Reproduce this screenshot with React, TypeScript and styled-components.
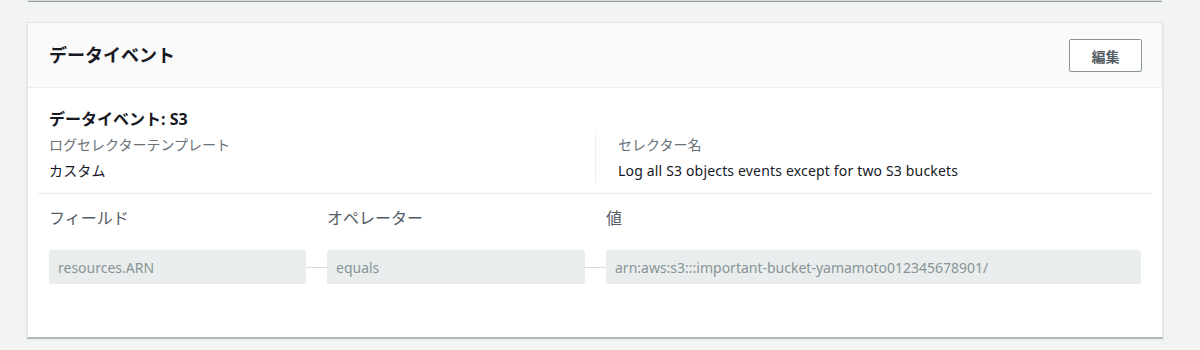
import React from "react";
import styled, { createGlobalStyle } from "styled-components";

const GlobalStyle = createGlobalStyle`
  html, body {
    margin: 0;
    padding: 0;
    background: #f2f3f3;
  }
  body {
    font-family: "Noto Sans", "Noto Sans CJK JP", sans-serif;
    color: #16191f;
  }
`;

const Page = styled.div`
  width: 1200px;
  height: 350px;
  box-sizing: border-box;
  padding: 0 37px 0 27px;
  overflow: hidden;
`;

const PrevCardEdge = styled.div`
  height: 1px;
  margin: 0 1px 20px;
  background: #d5dbdb;
  border-bottom: 1px solid #95a1a2;
`;

const Card = styled.section`
  background: #fff;
  border: 1px solid #e1e4e4;
  border-bottom-color: #aab7b8;
  box-shadow: 0 1px 1px 0 rgba(0, 28, 36, 0.25);
`;

const Header = styled.div`
  height: 65px;
  box-sizing: border-box;
  padding: 0 20px 0 21px;
  display: flex;
  align-items: center;
  justify-content: space-between;
  background: #fafafa;
  border-bottom: 1px solid #eaeded;
`;

const Title = styled.h2`
  margin: 0;
  font-size: 18px;
  font-weight: 700;
  line-height: 24px;
  color: #16191f;
`;

const Button = styled.button`
  width: 73px;
  height: 33px;
  margin-top: 1px;
  background: #fff;
  border: 1px solid #879596;
  border-radius: 2px;
  font-family: "Noto Sans CJK JP", sans-serif;
  font-size: 14px;
  font-weight: 700;
  color: #545b64;
  cursor: pointer;
`;

const Body = styled.div`
  padding: 20px 10px 53px;
`;

const Inner = styled.div`
  padding: 0 11px;
`;

const SubTitle = styled.h3`
  margin: 0 0 4px;
  font-size: 16px;
  font-weight: 700;
  line-height: 22px;
`;

const Columns = styled.div`
  display: grid;
  grid-template-columns: 1fr 1fr;
`;

const Column = styled.div<{ $divider?: boolean }>`
  padding-left: ${({ $divider }) => ($divider ? "22px" : "0")};
  border-left: ${({ $divider }) => ($divider ? "1px solid #eaeded" : "none")};
`;

const Key = styled.div`
  font-size: 14px;
  line-height: 22px;
  color: #687078;
`;

const Value = styled.div`
  margin-top: 4px;
  font-size: 14px;
  line-height: 22px;
  letter-spacing: 0.17px;
  color: #16191f;
`;

const Separator = styled.hr`
  margin: 11px 0 13px;
  border: 0;
  border-top: 1px solid #eaeded;
`;

const FieldGrid = styled.div`
  display: grid;
  grid-template-columns: 257px 21px 258px 21px 1fr;
  row-gap: 21px;
  align-items: center;
`;

const FieldLabel = styled.div`
  font-size: 16px;
  line-height: 22px;
  color: #545b64;
`;

const Input = styled.div`
  height: 34px;
  box-sizing: border-box;
  padding: 0 9px;
  display: flex;
  align-items: center;
  background: #eaeded;
  border-radius: 2px;
  font-size: 14px;
  color: #879596;
  white-space: nowrap;
`;

const Connector = styled.div`
  height: 1px;
  background: #d5dbdb;
`;

const Empty = styled.div``;

export default function App() {
  return (
    <>
      <GlobalStyle />
      <Page>
        <PrevCardEdge />
        <Card>
          <Header>
            <Title>データイベント</Title>
            <Button>編集</Button>
          </Header>
          <Body>
            <Inner>
              <SubTitle>データイベント: S3</SubTitle>
              <Columns>
                <Column>
                  <Key>ログセレクターテンプレート</Key>
                  <Value>カスタム</Value>
                </Column>
                <Column $divider>
                  <Key>セレクター名</Key>
                  <Value>Log all S3 objects events except for two S3 buckets</Value>
                </Column>
              </Columns>
            </Inner>
            <Separator />
            <Inner>
              <FieldGrid>
                <FieldLabel>フィールド</FieldLabel>
                <Empty />
                <FieldLabel>オペレーター</FieldLabel>
                <Empty />
                <FieldLabel>値</FieldLabel>
                <Input>resources.ARN</Input>
                <Connector />
                <Input>equals</Input>
                <Connector />
                <Input>arn:aws:s3:::important-bucket-yamamoto012345678901/</Input>
              </FieldGrid>
            </Inner>
          </Body>
        </Card>
      </Page>
    </>
  );
}
